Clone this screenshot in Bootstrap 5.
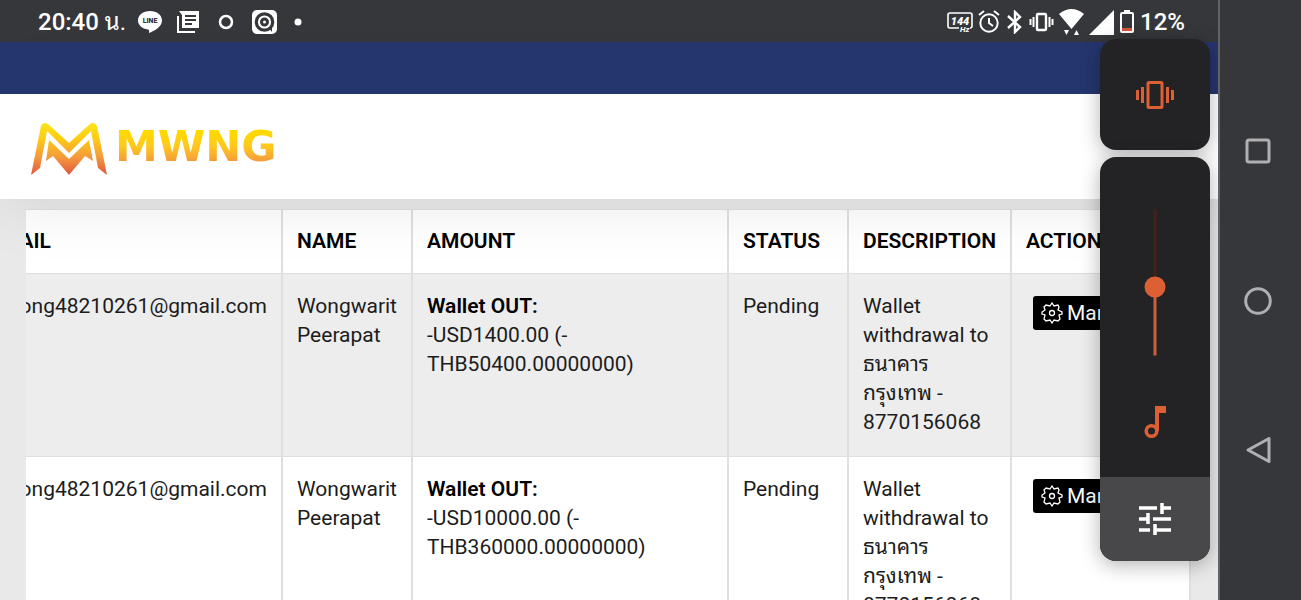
<!DOCTYPE html>
<html lang="en">
<head>
<meta charset="utf-8">
<meta name="viewport" content="width=device-width, initial-scale=1">
<title>MWNG</title>
<link href="https://cdn.jsdelivr.net/npm/bootstrap@5.3.0/dist/css/bootstrap.min.css" rel="stylesheet">
<style>
  body { font-family: Roboto, "Noto Sans Thai Looped", Loma, Garuda, "Noto Sans Thai", sans-serif; font-size: 21px; line-height: 29px; color: #1c1c1c; background: #e9e9e9; }
  svg { display: block; flex: none; }
  .screen { min-width: 0; }
  .status-bar { height: 42px; background: #36373a; color: #fff; font-size: 24px; font-weight: 500; padding: 2px 33px 0 38px; }
  .status-start { gap: 12px; }
  .status-icons-start { gap: 15px; }
  .status-icons-end { gap: 5px; }
  .thai-unit { font-weight: 400; }
  .blue-strip { height: 52px; background: #25356e; z-index: 3; }
  .site-header { height: 105px; padding: 0 31px; background: #fff; box-shadow: 0 0 70px rgba(0, 0, 0, .11); z-index: 2; }
  .brand-link { padding-top: 4px; }
  .brand-text { font: bold 43px/48px "DejaVu Sans", sans-serif; background: linear-gradient(#ffd800 22%, #ffc81e 45%, #f08d45 82%); -webkit-background-clip: text; background-clip: text; color: transparent; }
  .content { padding: 10px 27px 0 26px; }
  .tx-table { width: calc(100% + 51px); table-layout: fixed; background: #fff; }
  .tx-table th, .tx-table td { padding: 18px 14px 19px; border: solid #dfdfdf; border-width: 1px 2px 1px 0; vertical-align: top; }
  .tx-table th { padding: 17px 14px; color: #000; font-weight: 600; white-space: nowrap; }
  .tx-table strong { color: #000; font-weight: 600; }
  .tx-table tbody tr:nth-child(odd) { background: #ededed; }
  .c-mail { width: 307px; } .c-name { width: 130px; } .c-amount { width: 316px; }
  .c-status { width: 120px; } .c-desc { width: 163px; }
  .btn-manage { margin: 4px 0 0 7px; padding: 0 8px; height: 34px; font-size: 21px; line-height: 34px; background: #000; color: #fff; border: 0; border-radius: 3px; }
  .volume { top: 39px; right: 8px; width: 110px; gap: 7px; z-index: 5; }
  .volume-card { border-radius: 16px; background: #232325; box-shadow: 0 4px 20px rgba(0, 0, 0, .3); }
  .volume button { border: 0; background: none; color: #dc6033; }
  .mode-btn { height: 111px; }
  .slider-box { height: 250px; }
  .volume input { appearance: none; -webkit-appearance: none; flex: none; width: 146px; height: 21px; margin: 0; transform: rotate(-90deg); background: linear-gradient(90deg, #c8603c 46%, #43201a 46%) center / 100% 3px no-repeat; }
  .volume input::-webkit-slider-thumb { -webkit-appearance: none; width: 21px; height: 21px; border-radius: 50%; background: #dc6033; }
  .media-btn { height: 70px; padding: 0 0 40px; }
  .volume .settings-btn { height: 84px; background: #48484a; color: #fff; }
  .nav-keys { width: 83px; flex: none; background: #36373a; border-left: 2px solid #626366; padding: 136px 5px 0 0; gap: 120px; }
  .nav-keys button { border: 0; background: none; padding: 0; color: #b0b0b2; }
</style>
</head>
<body>
<div class="d-flex vh-100 overflow-hidden">
  <div class="screen position-relative flex-grow-1 d-flex flex-column overflow-hidden">
    <div class="status-bar d-flex align-items-center justify-content-between flex-shrink-0">
      <div class="status-start d-flex align-items-center">
        <span>20:40 <span class="thai-unit">น.</span></span>
        <div class="status-icons-start d-flex align-items-center">
          <svg width="24" height="24" viewBox="0 0 24 24"><path fill="#fff" d="M12 1C5 1 0 5 0 10.500C0 15 4 18.700 10 19.500C11.300 19.800 11.200 20.500 11 23C16 21 24 17 24 10.500C24 5 19 1 12 1Z"/><text x="12" y="13" text-anchor="middle" font-family="Roboto" font-size="7" font-weight="900" fill="#36373a">LINE</text></svg>
          <svg width="22" height="24" viewBox="0 0 22 24"><path fill="#fff" d="M2 1H22V18H5V5Z"/><path stroke="#36373a" stroke-width="2" d="M8 6H19M8 10H19M8 14H15"/><path d="M1 6V22H18" fill="none" stroke="#fff" stroke-width="2"/></svg>
          <svg width="23" height="24" viewBox="0 0 23 24"><circle cx="12" cy="12" r="6" fill="none" stroke="#fff" stroke-width="2.500"/></svg>
          <svg width="25" height="24" viewBox="0 0 25 24"><rect width="25" height="24" rx="5" fill="#fff"/><circle cx="12.500" cy="12" r="8.200" fill="none" stroke="#36373a" stroke-width="3.200"/><circle cx="12.500" cy="12" r="3" fill="none" stroke="#36373a" stroke-width="3"/><path d="M17 18L20 22V17Z" fill="#36373a"/></svg>
          <svg width="12" height="24" viewBox="0 0 12 24"><circle cx="6" cy="12" r="3.500" fill="#fff"/></svg>
        </div>
      </div>
      <div class="status-icons-end d-flex align-items-center">
        <svg width="26" height="24" viewBox="0 0 26 24"><path d="M12 18H3Q1 18 1 16V5Q1 3 3 3H23Q25 3 25 5V16Q25 18 23 18" fill="none" stroke="#fff" stroke-width="1.600"/><text x="13" y="14.500" text-anchor="middle" font-family="Roboto" font-style="italic" font-size="11" font-weight="900" fill="#fff">144</text><text x="13" y="22" font-family="Roboto" font-style="italic" font-size="8" font-weight="700" fill="#fff">Hz</text></svg>
        <svg width="22" height="24" viewBox="0 0 22 24" fill="none" stroke="#fff" stroke-width="2"><circle cx="11" cy="13" r="8.700"/><path d="M11 8V13L15 16M1 5L6 1M21 5L16 1"/></svg>
        <svg width="19" height="24" viewBox="0 0 19 24"><path d="M3 6L15 17L10 22V2L15 7L3 18" fill="none" stroke="#fff" stroke-width="2.400"/></svg>
        <svg width="25" height="24" viewBox="0 0 25 24" fill="none" stroke="#fff"><rect x="8" y="4" width="9" height="16" rx="1" stroke-width="2.400"/><path stroke-width="2" d="M1.500 9V15M4.500 7V17M20.500 7V17M23.500 9V15"/></svg>
        <svg width="25" height="28" viewBox="0 0 25 28" fill="#fff"><path d="M0 6Q12.500-4 25 6L12.500 21Z"/><path d="M5 22H10L7.500 27ZM15 27H20L17.500 22Z"/></svg>
        <svg width="25" height="26" viewBox="0 0 25 26"><path d="M25 1V26H0Z" fill="#fff"/></svg>
        <svg width="16" height="26" viewBox="0 0 16 26"><path d="M5 1H11V4H5Z" fill="#fff"/><rect x="2" y="4" width="12" height="19" rx="1" fill="none" stroke="#fff" stroke-width="2"/><path d="M3 19H13V22H3Z" fill="#d8563c"/></svg>
        <span>12%</span>
      </div>
    </div>
    <div class="blue-strip position-relative flex-shrink-0"></div>
    <header class="site-header position-relative d-flex align-items-center flex-shrink-0">
      <a href="#" class="brand-link d-flex text-decoration-none">
        <svg class="me-2" width="76" height="54" viewBox="0 0 76 54"><defs><linearGradient id="gold" gradientUnits="userSpaceOnUse" x1="0" y1="0" x2="0" y2="54"><stop offset="0" stop-color="#f8e71c"/><stop offset=".3" stop-color="#ffcc12"/><stop offset=".65" stop-color="#f49a3c"/><stop offset="1" stop-color="#e05240"/></linearGradient></defs><path fill="url(#gold)" d="M0 53L10 4Q12-1 17 2L38 21L59 2Q64-1 66 4L76 53L67 46L60 9L38 31L16 9L9 46ZM15 39L18 18L38 37L58 18L62 39L54 34L38 53L22 34Z"/></svg>
        <span class="brand-text">MWNG</span>
      </a>
    </header>
    <main class="content flex-grow-1">
      <div class="d-flex justify-content-end overflow-hidden">
        <table class="tx-table flex-shrink-0">
          <colgroup><col class="c-mail"><col class="c-name"><col class="c-amount"><col class="c-status"><col class="c-desc"><col></colgroup>
          <thead>
            <tr><th>EMAIL</th><th>NAME</th><th>AMOUNT</th><th>STATUS</th><th>DESCRIPTION</th><th>ACTION</th></tr>
          </thead>
          <tbody>
            <tr>
              <td class="text-end">wong48210261@gmail.com</td><td>Wongwarit Peerapat</td>
              <td><strong>Wallet OUT:</strong><br>-USD1400.00 (-<br>THB50400.00000000)</td><td>Pending</td>
              <td>Wallet withdrawal to ธนาคาร<br>กรุงเทพ -<br>8770156068</td>
              <td><button type="button" class="btn btn-manage d-flex align-items-center"><svg class="me-1" width="22" height="22" viewBox="0 0 22 22" fill="none" stroke="#fff" stroke-width="1.300"><path d="M9 4L11 1L13 4L17 3L18 5L17 8L21 10V12L18 13L19 17L17 19L13 18L11 21L9 18L5 19L3 17L4 13L1 12V10L4 8L3 5L5 3Z"/><circle cx="11" cy="11" r="2.500"/></svg>Manage</button></td>
            </tr>
            <tr>
              <td class="text-end">wong48210261@gmail.com</td><td>Wongwarit Peerapat</td>
              <td><strong>Wallet OUT:</strong><br>-USD10000.00 (-<br>THB360000.00000000)</td><td>Pending</td>
              <td>Wallet withdrawal to ธนาคาร<br>กรุงเทพ -<br>8770156068</td>
              <td><button type="button" class="btn btn-manage d-flex align-items-center"><svg class="me-1" width="22" height="22" viewBox="0 0 22 22" fill="none" stroke="#fff" stroke-width="1.300"><path d="M9 4L11 1L13 4L17 3L18 5L17 8L21 10V12L18 13L19 17L17 19L13 18L11 21L9 18L5 19L3 17L4 13L1 12V10L4 8L3 5L5 3Z"/><circle cx="11" cy="11" r="2.500"/></svg>Manage</button></td>
            </tr>
          </tbody>
        </table>
      </div>
    </main>
    <aside class="volume position-absolute d-flex flex-column" aria-label="Volume">
      <div class="volume-card">
        <button type="button" class="mode-btn w-100 d-flex align-items-center justify-content-center" aria-label="Vibrate"><svg width="38" height="28" viewBox="0 0 38 28" fill="none" stroke="currentColor" stroke-width="3"><rect x="12" y="1.500" width="14" height="25" rx="1"/><path d="M1.500 9V19M6.500 6V22M31.500 6V22M36.500 9V19"/></svg></button>
      </div>
      <div class="volume-card overflow-hidden">
        <div class="slider-box d-flex align-items-center justify-content-center"><input type="range" min="0" max="100" value="46" aria-label="Media volume"></div>
        <button type="button" class="media-btn w-100 d-flex align-items-center justify-content-center" aria-label="Media"><svg width="22" height="32" viewBox="0 0 22 32"><path fill="currentColor" d="M11 0H22V7H15V25H11Z"/><circle cx="7.500" cy="25" r="5.300" fill="none" stroke="currentColor" stroke-width="3.500"/></svg></button>
        <button type="button" class="settings-btn w-100 d-flex align-items-center justify-content-center" aria-label="Sound settings"><svg width="32" height="32" viewBox="0 0 32 32" stroke="currentColor" stroke-width="3.500"><path d="M0 5H18M23 0V11M23 5H32M0 16H9M9 10V21M14 16H32M0 27H11M16 21V32M16 27H32"/></svg></button>
      </div>
    </aside>
  </div>
  <nav class="nav-keys d-flex flex-column align-items-center" aria-label="System">
    <button type="button" aria-label="Recents"><svg width="28" height="30" viewBox="0 0 28 30"><rect x="3" y="4" width="22" height="22" rx="2" fill="none" stroke="currentColor" stroke-width="3"/></svg></button>
    <button type="button" aria-label="Home"><svg width="28" height="30" viewBox="0 0 28 30"><circle cx="14" cy="15" r="12.300" fill="none" stroke="currentColor" stroke-width="3"/></svg></button>
    <button type="button" aria-label="Back"><svg width="28" height="30" viewBox="0 0 28 30"><path d="M4 14L25 2.500V25.500Z" fill="none" stroke="currentColor" stroke-width="3" stroke-linejoin="round"/></svg></button>
  </nav>
</div>
<script src="https://cdn.jsdelivr.net/npm/bootstrap@5.3.0/dist/js/bootstrap.bundle.min.js"></script>
</body>
</html>
